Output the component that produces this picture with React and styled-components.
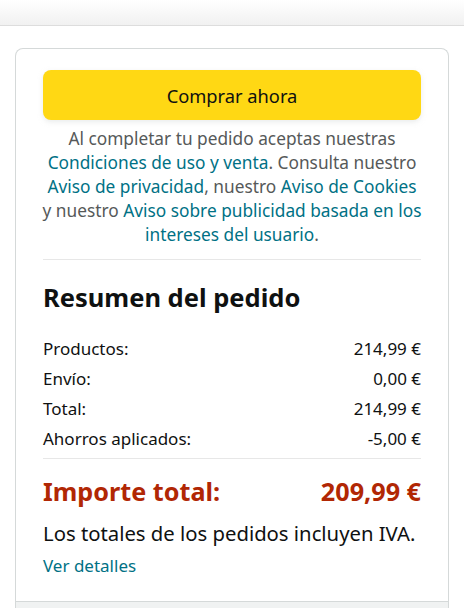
import styled, { createGlobalStyle } from 'styled-components';

const Global = createGlobalStyle`
  html, body {
    margin: 0;
    padding: 0;
    background: #fff;
  }
  body {
    font-family: 'Noto Sans', 'Open Sans', Arial, sans-serif;
    color: #0f1111;
  }
`;

const rows = [
  ['Productos:', '214,99 €'],
  ['Envío:', '0,00 €'],
  ['Total:', '214,99 €'],
  ['Ahorros aplicados:', '-5,00 €'],
];

function App() {
  return (
    <>
      <Global />
      <Page>
        <TopBar />
        <Card>
          <CardBody>
            <BuyButton>Comprar ahora</BuyButton>
            <Terms>
              Al completar tu pedido aceptas nuestras{' '}
              <Link>Condiciones de uso y venta</Link>. Consulta nuestro{' '}
              <Link>Aviso de privacidad</Link>, nuestro{' '}
              <Link>Aviso de Cookies</Link> y nuestro{' '}
              <Link>Aviso sobre publicidad basada en los intereses del usuario</Link>.
            </Terms>
            <Divider />
            <Title>Resumen del pedido</Title>
            <Rows>
              {rows.map(([label, value]) => (
                <Row key={label}>
                  <span>{label}</span>
                  <span>{value}</span>
                </Row>
              ))}
            </Rows>
            <Divider />
            <GrandTotal>
              <span>Importe total:</span>
              <span>209,99 €</span>
            </GrandTotal>
            <TaxNote>Los totales de los pedidos incluyen IVA.</TaxNote>
            <Details>Ver detalles</Details>
          </CardBody>
          <CardFooter />
        </Card>
      </Page>
    </>
  );
}

// -------------------------------------------------- styling ----------------------------------------------
const Page = styled.div`
  width: 464px;
  height: 608px;
  overflow: hidden;
  display: flex;
  flex-direction: column;
`;

const TopBar = styled.div`
  height: 25px;
  flex-shrink: 0;
  background: linear-gradient(to bottom, #ffffff, #f1f1f1);
  border-bottom: 1px solid #dddddd;
`;

const Card = styled.div`
  flex: 1;
  margin: 22px 15px 0 15px;
  border: 1px solid #d5d9d9;
  border-bottom: 0;
  border-radius: 8px 8px 0 0;
  display: flex;
  flex-direction: column;
`;

const CardBody = styled.div`
  padding: 21px 27px 23px 27px;
  display: flex;
  flex-direction: column;
`;

const BuyButton = styled.button`
  height: 50px;
  border: 0;
  border-radius: 8px;
  background: #ffd814;
  box-shadow: 0 2px 5px rgba(213, 217, 217, 0.5);
  font-family: inherit;
  font-size: 18.3px;
  color: #0f1111;
  cursor: pointer;
`;

const Terms = styled.p`
  margin: 7px -2px 12px;
  text-align: center;
  font-size: 17.3px;
  line-height: 24px;
  color: #565959;
`;

const Link = styled.span`
  color: #007185;
  cursor: pointer;
`;

const Divider = styled.hr`
  margin: 0;
  border: 0;
  border-top: 1px solid #e7e7e7;
`;

const Title = styled.h2`
  margin: 21px 0 24px;
  font-size: 25.5px;
  line-height: 32px;
  font-weight: 700;
`;

const Rows = styled.div`
  display: flex;
  flex-direction: column;
  gap: 6px;
  margin-bottom: 7px;
`;

const Row = styled.div`
  display: flex;
  justify-content: space-between;
  font-size: 17px;
  line-height: 24px;
`;

const GrandTotal = styled.div`
  display: flex;
  justify-content: space-between;
  margin-top: 16px;
  font-size: 25.2px;
  line-height: 32px;
  font-weight: 700;
  color: #b12704;
`;

const TaxNote = styled.div`
  margin-top: 11px;
  font-size: 20.3px;
  line-height: 30px;
`;

const Details = styled.div`
  margin-top: 6px;
  font-size: 17px;
  line-height: 24px;
  color: #007185;
  cursor: pointer;
`;

const CardFooter = styled.div`
  flex: 1;
  background: #f0f2f2;
  border-top: 1px solid #d5d9d9;
`;

export default App;
